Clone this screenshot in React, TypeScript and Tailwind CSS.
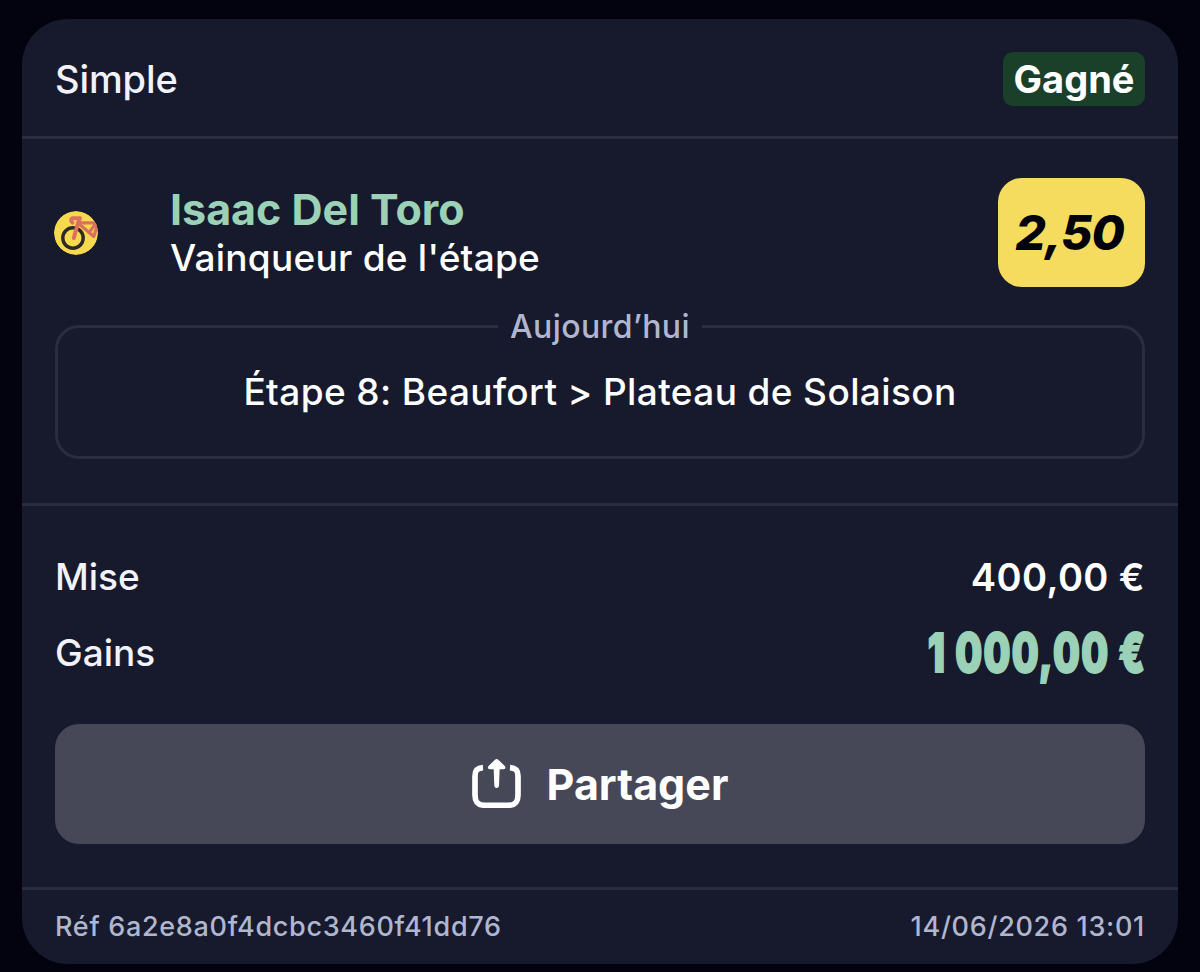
import React from "react";

const bet = {
  type: "Simple",
  status: "Gagné",
  selection: "Isaac Del Toro",
  market: "Vainqueur de l'étape",
  odds: "2,50",
  day: "Aujourd’hui",
  event: "Étape 8: Beaufort > Plateau de Solaison",
  stake: "400,00 €",
  winnings: "1 000,00 €",
  reference: "Réf 6a2e8a0f4dcbc3460f41dd76",
  placedAt: "14/06/2026 13:01",
};

function CyclingIcon() {
  return (
    <svg viewBox="0 0 44 44" className="-ml-px h-11 w-11">
      <defs>
        <clipPath id="badge">
          <circle cx="22" cy="22" r="22" />
        </clipPath>
      </defs>
      <g clipPath="url(#badge)" fill="none">
        <circle cx="22" cy="22" r="22" fill="#f7d94f" />
        <circle cx="19" cy="27" r="10.2" stroke="#2b2a25" strokeWidth="3.4" />
        <g stroke="#db7060" strokeLinecap="round" strokeLinejoin="round">
          <path d="M18.4 11.6C16.6 10.4 16.8 7.4 19.2 7.2H26C25 9 22.5 17 19.8 27" strokeWidth="4" />
          <path d="M24 11.8H42.5L35 21.5" strokeWidth="3.2" />
          <path d="M24.5 12.5L39.8 25.5L43.5 14" strokeWidth="3.2" />
        </g>
      </g>
    </svg>
  );
}

function ShareIcon() {
  return (
    <svg viewBox="50 42 147 147" className="-mt-[2px] h-[49px] w-[49px]">
      <path
        d="M83 68C66 69 59 76 59 93V150C59 172 68 181 90 181H157C179 181 188 172 188 150V93C188 76 181 69 164 68"
        fill="none"
        stroke="#fff"
        strokeWidth="17"
      />
      <path
        d="M119 44Q124 40 129 44L149 64Q153 72 145 73H133L131 123Q130 129 124 129Q118 129 117 123L115 73H103Q95 72 99 64Z"
        fill="#fff"
      />
    </svg>
  );
}

export default function App() {
  return (
    <div className="h-[972px] w-[1200px] overflow-hidden bg-[#03020f] px-[22px] pt-[19px] font-['Inter',sans-serif] text-white">
      <div className="flex h-[945px] flex-col rounded-[46px] bg-[#171a2c]">
        {/* HEADER */}
        <header className="flex h-[120px] items-center justify-between border-b-3 border-[#2b2d3f] px-[33px] pt-[3px]">
          <span className="text-[38px] leading-[46px] font-medium tracking-[-0.1px] text-[#f1f2fa]">
            {bet.type}
          </span>
          <span className="flex h-[54px] w-[142px] items-center justify-center rounded-[10px] bg-[#1a4029] text-[38px] font-bold">
            {bet.status}
          </span>
        </header>

        {/* SELECTION */}
        <section className="h-[367px] border-b-3 border-[#2b2d3f] px-[33px] pt-[39px]">
          <div className="flex h-[109px] items-center">
            <CyclingIcon />
            <div className="ml-[72px] flex-1">
              <div className="text-[43px] leading-[50px] font-bold text-[#9bd1b6]">
                {bet.selection}
              </div>
              <div className="text-[37px] leading-[48px] font-medium tracking-[0.25px]">
                {bet.market}
              </div>
            </div>
            <div className="flex h-[109px] w-[147px] items-center justify-center rounded-[24px] bg-[#f5dc5f] pr-[4px] text-[48px] font-extrabold tracking-[-0.8px] text-[#03020c] italic">
              {bet.odds}
            </div>
          </div>
          <fieldset className="mt-[22px] h-[150px] rounded-[24px] border-3 border-[#2b2d3f] text-center">
            <legend className="mx-auto px-[12px] pt-px text-[32px] leading-[33px] font-medium tracking-[0.4px] text-[#b0b6cf]">
              {bet.day}
            </legend>
            <div className="mt-[26px] text-[37px] leading-[46px] font-medium tracking-[0.38px]">
              {bet.event}
            </div>
          </fieldset>
        </section>

        {/* AMOUNTS */}
        <section className="h-[384px] border-b-3 border-[#2b2d3f] px-[33px] pt-[47px]">
          <div className="flex h-[48px] items-center justify-between">
            <span className="text-[37px] font-medium text-[#f1f2fa]">Mise</span>
            <span className="text-[38px] font-semibold tracking-[0.4px]">
              {bet.stake}
            </span>
          </div>
          <div className="mt-[28px] flex h-[48px] items-center justify-between">
            <span className="text-[37px] font-medium text-[#f1f2fa]">
              Gains
            </span>
            <span className="-mr-px origin-right scale-x-[0.7] text-[54px] leading-[56px] font-black tracking-[2px] whitespace-nowrap text-[#9bd1b6] [-webkit-text-stroke:2px_#9bd1b6]">
              {bet.winnings}
            </span>
          </div>
          <button className="mt-[47px] flex h-[120px] w-full items-center justify-center gap-[26px] rounded-[24px] bg-[#464857] text-[43px] font-bold">
            <ShareIcon />
            Partager
          </button>
        </section>

        {/* FOOTER */}
        <footer className="flex flex-1 items-center justify-between px-[33px] text-[27px] font-medium tracking-[0.7px] text-[#b0b6cf]">
          <span>{bet.reference}</span>
          <span>{bet.placedAt}</span>
        </footer>
      </div>
    </div>
  );
}
